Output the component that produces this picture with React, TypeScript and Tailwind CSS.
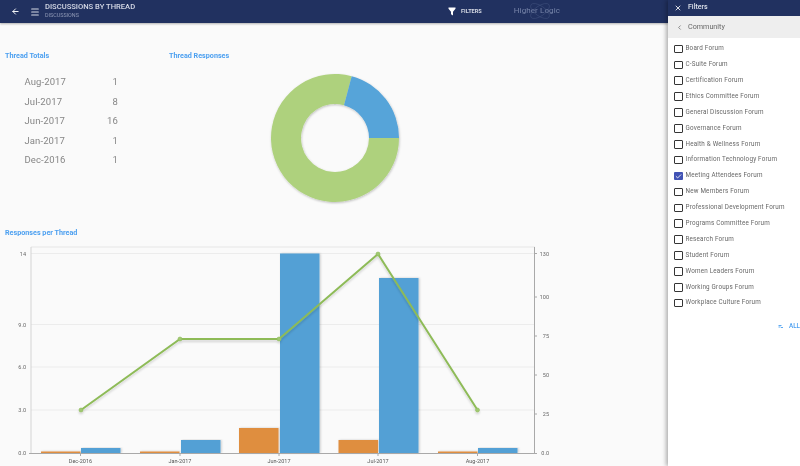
import React from 'react';
import { ArrowLeft, Check, ChevronLeft, Menu, X } from 'lucide-react';

const totals = [
  { label: 'Aug-2017', value: 1 },
  { label: 'Jul-2017', value: 8 },
  { label: 'Jun-2017', value: 16 },
  { label: 'Jan-2017', value: 1 },
  { label: 'Dec-2016', value: 1 },
];

const forums = [
  'Board Forum',
  'C-Suite Forum',
  'Certification Forum',
  'Ethics Committee Forum',
  'General Discussion Forum',
  'Governance Forum',
  'Health & Wellness Forum',
  'Information Technology Forum',
  'Meeting Attendees Forum',
  'New Members Forum',
  'Professional Development Forum',
  'Programs Committee Forum',
  'Research Forum',
  'Student Forum',
  'Women Leaders Forum',
  'Working Groups Forum',
  'Workplace Culture Forum',
];

const bars = [
  { label: 'Dec-2016', tick: 80.5, orange: [41, 451.5], blue: [81, 448] },
  { label: 'Jan-2017', tick: 180, orange: [140, 451.5], blue: [181, 440] },
  { label: 'Jun-2017', tick: 279, orange: [239, 428], blue: [280, 253.5] },
  { label: 'Jul-2017', tick: 378, orange: [338.5, 440], blue: [379, 278] },
  { label: 'Aug-2017', tick: 477.5, orange: [438, 451.5], blue: [478, 448] },
];

const leftTicks = [
  { label: '14', y: 253.5 },
  { label: '9.0', y: 324.5 },
  { label: '6.0', y: 367 },
  { label: '3.0', y: 410 },
  { label: '0.0', y: 453 },
];

const rightTicks = [
  { label: '130', y: 253.5 },
  { label: '100', y: 297 },
  { label: '75', y: 336 },
  { label: '50', y: 375 },
  { label: '25', y: 414 },
  { label: '0.0', y: 453 },
];

const Donut = () => (
  <svg width="140" height="140" viewBox="0 0 140 140">
    <defs>
      <filter id="donutShadow" x="-10%" y="-10%" width="120%" height="120%">
        <feDropShadow dx="0.5" dy="1" stdDeviation="1" floodColor="#000" floodOpacity="0.25" />
      </filter>
    </defs>
    <g filter="url(#donutShadow)">
      <path
        d="M134 70 A64 64 0 1 1 86.7 8.2 L79 37.2 A34 34 0 1 0 104 70 Z"
        fill="#aed17c"
      />
      <path d="M86.7 8.2 A64 64 0 0 1 134 70 L104 70 A34 34 0 0 0 79 37.2 Z" fill="#54a3d9" />
    </g>
  </svg>
);

// chart box starts at (0, 240) of the page
const ComboChart = () => (
  <svg width="560" height="226" viewBox="0 240 560 226" fontFamily="Roboto, sans-serif">
    <defs>
      <filter id="barShadow" x="-10%" y="-5%" width="120%" height="110%">
        <feDropShadow dx="1" dy="0" stdDeviation="0.8" floodColor="#000" floodOpacity="0.2" />
      </filter>
      <filter id="lineShadow" x="-5%" y="-5%" width="110%" height="115%">
        <feDropShadow dx="0" dy="2" stdDeviation="1" floodColor="#000" floodOpacity="0.16" />
      </filter>
    </defs>
    <line x1="31" y1="247" x2="535" y2="247" stroke="#e6e6e6" />
    {leftTicks.slice(0, 4).map((t) => (
      <line key={t.label} x1="31" y1={t.y} x2="535" y2={t.y} stroke="#ececec" />
    ))}
    <line x1="31" y1="247" x2="31" y2="453" stroke="#d4d4d4" />
    <line x1="534.5" y1="247" x2="534.5" y2="453" stroke="#a8a8a8" />
    {bars.map((b) => (
      <g key={b.label} filter="url(#barShadow)">
        <rect x={b.orange[0]} y={b.orange[1]} width="39.5" height={453 - b.orange[1]} fill="#df8d3e" />
        <rect x={b.blue[0]} y={b.blue[1]} width="39.5" height={453 - b.blue[1]} fill="#519fd5" />
      </g>
    ))}
    <line x1="29" y1="453.5" x2="537" y2="453.5" stroke="#a8a8a8" />
    <g filter="url(#lineShadow)">
      <polyline
        points="81,410 180,339 279,339 378,254 477.5,410"
        fill="none"
        stroke="#8dbb57"
        strokeWidth="2"
      />
      {[
        [81, 410],
        [180, 339],
        [279, 339],
        [378, 254],
        [477.5, 410],
      ].map(([x, y]) => (
        <circle key={x} cx={x} cy={y} r="2" fill="#9fc870" stroke="#8dbb57" strokeWidth="0.6" />
      ))}
    </g>
    {leftTicks.map((t) => (
      <text key={t.label} x="26" y={t.y + 2} textAnchor="end" fontSize="5.5" fill="#666">
        {t.label}
      </text>
    ))}
    {rightTicks.map((t) => (
      <text key={t.label} x="549" y={t.y + 2} textAnchor="end" fontSize="5.5" fill="#666">
        {t.label}
      </text>
    ))}
    {bars.map((b) => (
      <g key={b.label}>
        <line x1={b.tick} y1="453" x2={b.tick} y2="456" stroke="#a8a8a8" />
        <text x={b.tick} y="463" textAnchor="middle" fontSize="5.5" fill="#555">
          {b.label}
        </text>
      </g>
    ))}
    {[253.5, 297, 336, 375, 414].map((y) => (
      <line key={y} x1="535" y1={y} x2="537" y2={y} stroke="#a8a8a8" />
    ))}
  </svg>
);

const ForumRow = ({ name, checked }: { name: string; checked: boolean }) => (
  <div className="flex h-[15.9px] items-center">
    {checked ? (
      <span className="flex h-[8.5px] w-[8.5px] items-center justify-center rounded-[1px] bg-[#3f51b5] text-white">
        <Check size={7} strokeWidth={3} />
      </span>
    ) : (
      <span className="h-[8.5px] w-[8.5px] rounded-[1px] border border-[#333]" />
    )}
    <span className="ml-[3px] whitespace-nowrap text-[6.3px] tracking-[0.2px] text-[#666]">{name}</span>
  </div>
);

export default function App() {
  return (
    <div className="relative flex h-[466px] w-[800px] overflow-hidden bg-[#fafafa] font-['Roboto',sans-serif] opacity-[0.99]">
      <div className="flex w-[668px] shrink-0 flex-col">
        {/* Top bar */}
        <header className="flex h-[23px] shrink-0 items-center bg-[#1f2f5f] text-white shadow-[0_1px_2px_rgba(0,0,0,0.3)]">
          <ArrowLeft size={9} strokeWidth={2.5} className="ml-[11px]" />
          <Menu size={10} strokeWidth={2.5} className="ml-[10px] text-[#d5d9e4]" />
          <div className="ml-[5px] mb-[2px] leading-none">
            <div className="text-[7.6px] font-medium text-[#d5d9e6]">DISCUSSIONS BY THREAD</div>
            <div className="mt-[2px] text-[5.4px] text-[#8f99b5]">DISCUSSIONS</div>
          </div>
          <div className="ml-auto flex items-center">
            <svg width="8" height="9" viewBox="0 0 8 9" fill="#fff">
              <path d="M0.5 0.5h7v1.3L5 4.8V8.5L3 7.3V4.8L0.5 1.8z" />
            </svg>
            <span className="ml-[5px] text-[5.6px] font-bold text-[#d5d9e4]">FILTERS</span>
          </div>
          <div className="relative ml-[32px] mr-[108px] mb-[2px] text-[8px] tracking-[0.1px] text-[#7684a8]">
            Higher Logic
            <svg
              className="absolute left-[14px] top-[-6px]"
              width="24"
              height="24"
              viewBox="0 0 24 24"
              fill="none"
              stroke="#3a4a78"
              strokeWidth="0.6"
            >
              <ellipse cx="12" cy="12" rx="11" ry="5" transform="rotate(35 12 12)" />
              <ellipse cx="12" cy="12" rx="11" ry="5" transform="rotate(-35 12 12)" />
            </svg>
          </div>
        </header>

        <main className="flex flex-1 flex-col px-[5px]">
          <div className="flex h-[188px]">
            <section className="w-[164px]">
              <h2 className="mt-[28px] text-[7.2px] font-bold text-[#4a9ff0]">Thread Totals</h2>
              <div className="mt-[10.5px] w-[113px] pl-[19.5px] text-[9.5px] tracking-[0.1px] text-[#858585]">
                {totals.map((t) => (
                  <div key={t.label} className="flex h-[19.6px] items-center justify-between">
                    <span>{t.label}</span>
                    <span>{t.value}</span>
                  </div>
                ))}
              </div>
            </section>
            <section className="flex-1">
              <h2 className="mt-[28px] text-[7.2px] font-bold text-[#4a9ff0]">Thread Responses</h2>
              <div className="ml-[96px] mt-[6px]">
                <Donut />
              </div>
            </section>
          </div>
          <h2 className="mt-[17px] text-[7.2px] font-bold text-[#4a9ff0]">Responses per Thread</h2>
          <div className="-ml-[5px] mt-[1px]">
            <ComboChart />
          </div>
        </main>
      </div>

      {/* Filters panel */}
      <aside className="flex w-[132px] shrink-0 flex-col bg-white shadow-[-2px_0_4px_rgba(0,0,0,0.3)]">
        <div className="flex h-[16px] items-center bg-[#1f2f5f] text-white">
          <X size={8} strokeWidth={2.5} className="ml-[6px]" />
          <span className="ml-[6px] mb-[2px] text-[7px] font-medium text-[#dfe3ec]">Filters</span>
        </div>
        <div className="flex h-[22px] items-center bg-[#eeeeee] text-[#666]">
          <ChevronLeft size={7} strokeWidth={2.5} className="ml-[8px]" />
          <span className="ml-[5px] text-[7.2px]">Community</span>
        </div>
        <div className="mt-[3px] pl-[6px]">
          {forums.map((f) => (
            <ForumRow key={f} name={f} checked={f === 'Meeting Attendees Forum'} />
          ))}
        </div>
        <div className="mt-[11px] flex items-center justify-end text-[#4a9ff0]">
          <svg width="6" height="6" viewBox="0 0 6 6" fill="none" stroke="currentColor" strokeWidth="0.9">
            <path d="M0.5 1.5h3M0.5 3h2M3 4l1-1 1 1" />
          </svg>
          <span className="ml-[5px] text-[6.3px] font-medium">ALL</span>
        </div>
      </aside>
    </div>
  );
}
